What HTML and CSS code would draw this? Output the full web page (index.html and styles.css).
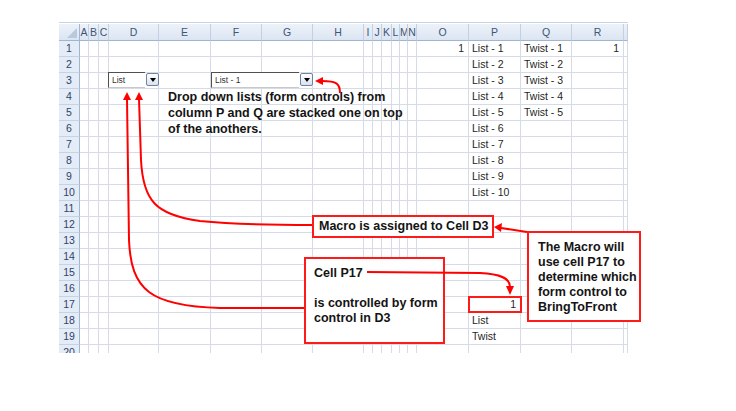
FILE: index.html
```html
<!DOCTYPE html>
<html>
<head>
<meta charset="utf-8">
<link rel="stylesheet" href="styles.css">
</head>
<body>
<div class="page">
  <div class="sheet">
    <div class="row hdr"><span class="corner"></span><span>A</span><span>B</span><span>C</span><span>D</span><span>E</span><span>F</span><span>G</span><span>H</span><span>I</span><span>J</span><span>K</span><span>L</span><span>M</span><span>N</span><span>O</span><span>P</span><span>Q</span><span>R</span><span></span></div>
    <div class="row"><span class="rh">1</span><span></span><span></span><span></span><span></span><span></span><span></span><span></span><span></span><span></span><span></span><span></span><span></span><span></span><span></span><span class="num">1</span><span>List - 1</span><span>Twist - 1</span><span class="num">1</span><span></span></div>
    <div class="row"><span class="rh">2</span><span></span><span></span><span></span><span></span><span></span><span></span><span></span><span></span><span></span><span></span><span></span><span></span><span></span><span></span><span></span><span>List - 2</span><span>Twist - 2</span><span></span><span></span></div>
    <div class="row"><span class="rh">3</span><span></span><span></span><span></span><span></span><span></span><span></span><span></span><span></span><span></span><span></span><span></span><span></span><span></span><span></span><span></span><span>List - 3</span><span>Twist - 3</span><span></span><span></span></div>
    <div class="row"><span class="rh">4</span><span></span><span></span><span></span><span></span><span></span><span></span><span></span><span></span><span></span><span></span><span></span><span></span><span></span><span></span><span></span><span>List - 4</span><span>Twist - 4</span><span></span><span></span></div>
    <div class="row"><span class="rh">5</span><span></span><span></span><span></span><span></span><span></span><span></span><span></span><span></span><span></span><span></span><span></span><span></span><span></span><span></span><span></span><span>List - 5</span><span>Twist - 5</span><span></span><span></span></div>
    <div class="row"><span class="rh">6</span><span></span><span></span><span></span><span></span><span></span><span></span><span></span><span></span><span></span><span></span><span></span><span></span><span></span><span></span><span></span><span>List - 6</span><span></span><span></span><span></span></div>
    <div class="row"><span class="rh">7</span><span></span><span></span><span></span><span></span><span></span><span></span><span></span><span></span><span></span><span></span><span></span><span></span><span></span><span></span><span></span><span>List - 7</span><span></span><span></span><span></span></div>
    <div class="row"><span class="rh">8</span><span></span><span></span><span></span><span></span><span></span><span></span><span></span><span></span><span></span><span></span><span></span><span></span><span></span><span></span><span></span><span>List - 8</span><span></span><span></span><span></span></div>
    <div class="row"><span class="rh">9</span><span></span><span></span><span></span><span></span><span></span><span></span><span></span><span></span><span></span><span></span><span></span><span></span><span></span><span></span><span></span><span>List - 9</span><span></span><span></span><span></span></div>
    <div class="row"><span class="rh">10</span><span></span><span></span><span></span><span></span><span></span><span></span><span></span><span></span><span></span><span></span><span></span><span></span><span></span><span></span><span></span><span>List - 10</span><span></span><span></span><span></span></div>
    <div class="row"><span class="rh">11</span><span></span><span></span><span></span><span></span><span></span><span></span><span></span><span></span><span></span><span></span><span></span><span></span><span></span><span></span><span></span><span></span><span></span><span></span><span></span></div>
    <div class="row"><span class="rh">12</span><span></span><span></span><span></span><span></span><span></span><span></span><span></span><span></span><span></span><span></span><span></span><span></span><span></span><span></span><span></span><span></span><span></span><span></span><span></span></div>
    <div class="row"><span class="rh">13</span><span></span><span></span><span></span><span></span><span></span><span></span><span></span><span></span><span></span><span></span><span></span><span></span><span></span><span></span><span></span><span></span><span></span><span></span><span></span></div>
    <div class="row"><span class="rh">14</span><span></span><span></span><span></span><span></span><span></span><span></span><span></span><span></span><span></span><span></span><span></span><span></span><span></span><span></span><span></span><span></span><span></span><span></span><span></span></div>
    <div class="row"><span class="rh">15</span><span></span><span></span><span></span><span></span><span></span><span></span><span></span><span></span><span></span><span></span><span></span><span></span><span></span><span></span><span></span><span></span><span></span><span></span><span></span></div>
    <div class="row"><span class="rh">16</span><span></span><span></span><span></span><span></span><span></span><span></span><span></span><span></span><span></span><span></span><span></span><span></span><span></span><span></span><span></span><span></span><span></span><span></span><span></span></div>
    <div class="row"><span class="rh">17</span><span></span><span></span><span></span><span></span><span></span><span></span><span></span><span></span><span></span><span></span><span></span><span></span><span></span><span></span><span></span><span class="num">1</span><span></span><span></span><span></span></div>
    <div class="row"><span class="rh">18</span><span></span><span></span><span></span><span></span><span></span><span></span><span></span><span></span><span></span><span></span><span></span><span></span><span></span><span></span><span></span><span>List</span><span></span><span></span><span></span></div>
    <div class="row"><span class="rh">19</span><span></span><span></span><span></span><span></span><span></span><span></span><span></span><span></span><span></span><span></span><span></span><span></span><span></span><span></span><span></span><span>Twist</span><span></span><span></span><span></span></div>
    <div class="row"><span class="rh">20</span><span></span><span></span><span></span><span></span><span></span><span></span><span></span><span></span><span></span><span></span><span></span><span></span><span></span><span></span><span></span><span></span><span></span><span></span><span></span></div>
  </div>

  <div class="combo combo-d3"><div class="combo-field">List</div><div class="combo-btn"><i class="tri"></i></div></div>
  <div class="combo combo-f3"><div class="combo-field">List - 1</div><div class="combo-btn"><i class="tri"></i></div></div>

  <div class="note note-drop">Drop down lists (form controls) from<br>column P and Q are stacked one on top<br>of the anothers.</div>

  <div class="note box box-macro">Macro is assigned to Cell D3</div>
  <div class="note box box-right">The Macro will<br>use cell P17 to<br>determine which<br>form control to<br>BringToFront</div>
  <div class="note box box-p17">Cell P17<br><br>is controlled by form<br>control in D3</div>
  <div class="cell-mark"></div>

  <svg class="arrows" width="736" height="411" viewBox="0 0 736 411">
    <g fill="none" stroke="#ff0000" stroke-width="2">
      <path d="M127,99 L129,240 C131,290 150,306 220,308 L304,308"/>
      <path d="M139,99 L141,160 C143,200 155,215 200,221 C230,224 270,225 312,225"/>
      <path d="M340,93 C340,84 337,81 322,81"/>
      <path d="M527,232 L501,228"/>
      <path d="M367,272 L480,273 C500,274 510,278 510,287"/>
    </g>
    <g fill="#ff0000">
      <polygon points="127,92 123,100 131,100"/>
      <polygon points="139,92 135,100 143,100"/>
      <polygon points="315,81 323,77 323,85"/>
      <polygon points="494,227 502,223 501,232"/>
      <polygon points="510,295 506,286 514,286"/>
    </g>
  </svg>
</div>
</body>
</html>
```

FILE: styles.css
```css
html, body {
  margin: 0;
  padding: 0;
  background: #ffffff;
}

body {
  font-family: "Liberation Sans", Arial, sans-serif;
}

.page {
  position: relative;
  width: 736px;
  height: 411px;
  overflow: hidden;
  box-sizing: border-box;
  padding: 22px 0 0 59px;
}

.sheet {
  width: 569px;
  height: 331px;
  overflow: hidden;
  box-sizing: border-box;
  border-top: 1px solid #c9d4e3;
  padding-top: 1px;
}

.row {
  display: grid;
  grid-template-columns: 21px 9px 10px 10px 50px 52px 51px 51px 51px 9px 9px 10px 8px 8px 9px 52px 52px 51px 52px 4px;
  height: 16px;
}

.row > span {
  box-sizing: border-box;
  border-right: 1px solid #d5dce8;
  border-bottom: 1px solid #d5dce8;
  font-size: 10.5px;
  line-height: 15px;
  color: #1f1f1f;
  padding-left: 3px;
  white-space: nowrap;
  overflow: hidden;
}

.row > span.num {
  text-align: right;
  padding-left: 0;
  padding-right: 4px;
}

.row > span.rh {
  background: #e4ecf7;
  border-right: 1px solid #9fb5d0;
  border-bottom: 1px solid #c6d3e4;
  color: #2f4466;
  text-align: center;
  padding-left: 0;
  font-size: 10.5px;
}

.row.hdr {
  height: 17px;
}

.row.hdr > span {
  background: linear-gradient(#edf2f9, #dbe5f2);
  border-right: 1px solid #c3d0e2;
  border-bottom: 1px solid #9fb5d0;
  color: #3f5576;
  text-align: center;
  padding-left: 0;
  line-height: 16px;
  font-size: 10.5px;
}

.row.hdr > span.corner {
  position: relative;
  border-right-color: #9fb5d0;
}

.corner::after {
  content: "";
  position: absolute;
  right: 2px;
  bottom: 2px;
  border-left: 10px solid transparent;
  border-bottom: 10px solid #b9c8dc;
}

/* form controls */
.combo {
  position: absolute;
  top: 72px;
  height: 16px;
  display: flex;
  gap: 1px;
}

.combo-d3 {
  left: 108px;
  width: 51px;
}

.combo-f3 {
  left: 211px;
  width: 102px;
}

.combo-field {
  flex: 1;
  box-sizing: border-box;
  background: #fff;
  border-top: 1px solid #505050;
  border-left: 1px solid #505050;
  border-bottom: 1px solid #c8c8c8;
  font-size: 8.5px;
  line-height: 14px;
  color: #333;
  padding-left: 3px;
}

.combo-btn {
  width: 13px;
  height: 13px;
  margin-top: 1px;
  box-sizing: border-box;
  border: 1px solid #6e84a3;
  border-radius: 2px;
  background: linear-gradient(#ffffff, #dbe2ec);
  display: flex;
  align-items: center;
  justify-content: center;
}

.tri {
  width: 0;
  height: 0;
  border-left: 3.5px solid transparent;
  border-right: 3.5px solid transparent;
  border-top: 4px solid #000;
}

/* annotations */
.arrows {
  position: absolute;
  left: 0;
  top: 0;
}

.note {
  position: absolute;
  font-family: "Liberation Sans", Arial, sans-serif;
  font-weight: bold;
  font-size: 12.5px;
  color: #141414;
  white-space: nowrap;
}

.note-drop {
  left: 168px;
  top: 89px;
  line-height: 16px;
}

.box {
  box-sizing: border-box;
  background: #ffffff;
  border: 2px solid #ff1a1a;
}

.box-macro {
  left: 312px;
  top: 215px;
  width: 182px;
  height: 23px;
  line-height: 19px;
  padding-left: 5px;
}

.box-right {
  left: 527px;
  top: 231px;
  width: 114px;
  height: 91px;
  line-height: 15px;
  padding: 7px 0 0 9px;
}

.box-p17 {
  left: 304px;
  top: 257px;
  width: 141px;
  height: 87px;
  line-height: 15px;
  padding: 7px 0 0 8px;
}

.cell-mark {
  position: absolute;
  left: 468px;
  top: 296px;
  width: 54px;
  height: 17px;
  box-sizing: border-box;
  border: 2px solid #ff1a1a;
}
```
